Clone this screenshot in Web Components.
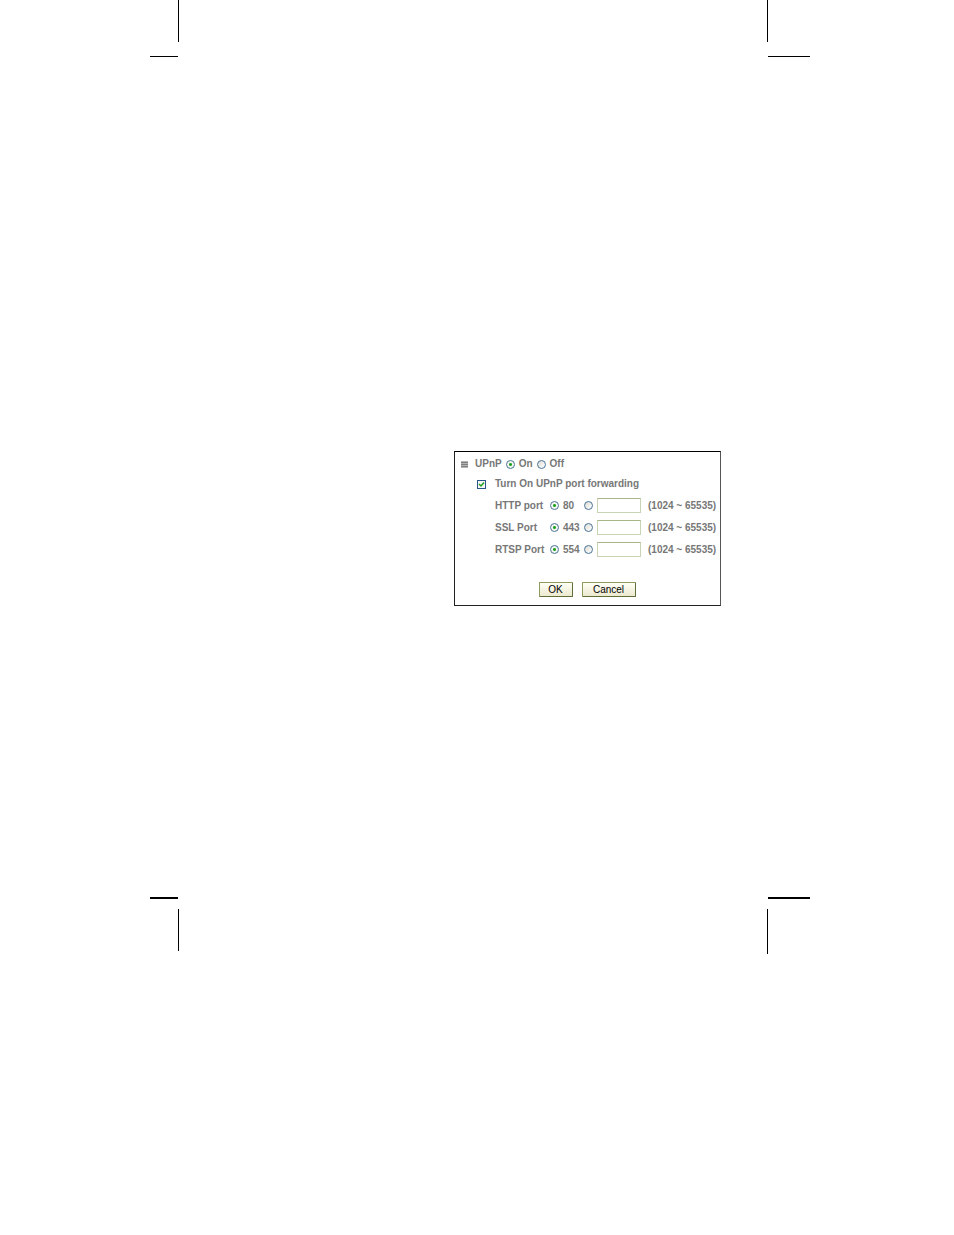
<!DOCTYPE html>
<html lang="en">
<head>
<meta charset="utf-8">
<title>UPnP</title>
<style>
    body {
        margin: 0;
        background: #fff;
        color: #777;
        font-family: "Liberation Sans", Arial, sans-serif;
        font-size: 10px;
        line-height: 12px;
    }
</style>
</head>
<body>
<manual-sheet>
    <upnp-panel>
        <port-row label="HTTP port" value="80"></port-row>
        <port-row label="SSL Port" value="443"></port-row>
        <port-row label="RTSP Port" value="554"></port-row>
        <push-button slot="actions">OK</push-button>
        <push-button slot="actions" wide>Cancel</push-button>
    </upnp-panel>
</manual-sheet>

<script>
// Look of the radio buttons, shared by the elements that hold them
const radioStyle = `
    input[type="radio"] {
        appearance: none;
        box-sizing: border-box;
        flex: none;
        width: 9px;
        height: 9px;
        margin: 0;
        border: 1px solid #4a7396;
        border-radius: 50%;
        background: linear-gradient(135deg, #dcdcd6, #fff);
    }
    input[type="radio"]:checked {
        background: radial-gradient(circle, #21a121 0, #21a121 1px, #f4f6f2 2px);
    }
`;

/**
 * CropMark
 * --------
 * One corner of the sheet's trim marks.
 * Attributes: right, bottom
 */
class CropMark extends HTMLElement {
    constructor(){
        super();
        this.attachShadow({mode: 'open'});
        this.shadowRoot.innerHTML = `
<style>
    :host {
        display: flex;
        flex-direction: column;
        gap: 14px;
        width: 29px;
    }
    :host([right]) {
        width: 43px;
    }
    :host([bottom]) {
        flex-direction: column-reverse;
        justify-content: flex-end;
        gap: 10px;
    }
    .upright {
        align-self: flex-end;
        width: 1px;
        height: 42px;
        background: #000;
    }
    .level {
        height: 1px;
        margin-right: 1px;
        background: #000;
    }
    :host([right]) .upright {
        align-self: flex-start;
    }
    :host([right]) .level {
        margin: 0 0 0 1px;
    }
    :host([bottom]) .level {
        height: 2px;
    }
    :host([bottom][right]) .upright {
        height: 45px;
    }
</style>
<div class="upright"></div>
<div class="level"></div>
`;
    }
}

/**
 * ManualSheet
 * -----------
 * Printed page with a trim mark at each corner
 */
class ManualSheet extends HTMLElement {
    constructor(){
        super();
        this.attachShadow({mode: 'open'});
        this.shadowRoot.innerHTML = `
<style>
    :host {
        display: block;
        padding: 0 144px 0 150px;
    }
    .marks {
        display: flex;
        justify-content: space-between;
    }
    main {
        padding: 394px 89px 291px 304px;
    }
</style>
<div class="marks">
    <crop-mark></crop-mark>
    <crop-mark right></crop-mark>
</div>
<main><slot></slot></main>
<div class="marks">
    <crop-mark bottom></crop-mark>
    <crop-mark bottom right></crop-mark>
</div>
`;
    }
}

/**
 * UpnpPanel
 * ---------
 * Takes port rows, and buttons in the
 * "actions" slot
 */
class UpnpPanel extends HTMLElement {
    constructor(){
        super();
        this.attachShadow({mode: 'open'});
        this.shadowRoot.innerHTML = `
<style>
    ${radioStyle}
    :host {
        display: block;
        padding: 6px 0 8px 6px;
        border: 1px solid #222;
        border-top-color: #000;
        border-right-color: #555;
        font-weight: bold;
    }
    .line,
    label {
        display: flex;
        align-items: center;
        gap: 4px;
        white-space: nowrap;
    }
    .bullet {
        flex: none;
        width: 7px;
        height: 7px;
        margin-right: 3px;
    }
    .forwarding {
        gap: 9px;
        padding: 8px 0 0 16px;
    }
    input[type="checkbox"] {
        appearance: none;
        box-sizing: border-box;
        flex: none;
        width: 9px;
        height: 9px;
        margin: 0;
        border: 1px solid #2a5588;
        background: #f6f6f2;
    }
    .check {
        display: grid;
    }
    .check > * {
        grid-area: 1 / 1;
    }
    .check svg {
        width: 9px;
        height: 9px;
        pointer-events: none;
    }
    input:not(:checked) + svg {
        visibility: hidden;
    }
    .ports {
        display: grid;
        gap: 7px;
        padding: 8px 0 0 34px;
    }
    .actions {
        display: flex;
        justify-content: center;
        gap: 9px;
        padding: 25px 7px 0 0;
    }
</style>
<div class="line" role="radiogroup" aria-labelledby="title">
    <svg class="bullet" viewBox="0 0 7 7"><path d="M0 0h7v7H0z" fill="#b4b4b4"/><path d="M0 1.500h7M0 3.500h7M0 5.500h7" stroke="#808080"/></svg>
    <span id="title">UPnP</span>
    <label><input type="radio" name="upnp" checked>On</label>
    <label><input type="radio" name="upnp">Off</label>
</div>
<label class="forwarding">
    <span class="check">
        <input type="checkbox" checked>
        <svg viewBox="0 0 9 9"><path d="M2 4l2 2 3-3.500" fill="none" stroke="#21a121" stroke-width="1.500"/></svg>
    </span>
    Turn On UPnP port forwarding
</label>
<div class="ports"><slot></slot></div>
<div class="actions"><slot name="actions"></slot></div>
`;
    }
}

/**
 * PortRow
 * -------
 * Choice between the default port and
 * one typed in by hand
 */
class PortRow extends HTMLElement {
    constructor(){
        super();
        this.attachShadow({mode: 'open'});
        this.shadowRoot.innerHTML = `
<style>
    ${radioStyle}
    :host {
        display: grid;
        grid-template-columns: 55px 34px 13px 44px auto;
        align-items: center;
        white-space: nowrap;
    }
    label {
        display: flex;
        align-items: center;
        gap: 4px;
    }
    input[type="text"] {
        box-sizing: border-box;
        width: 44px;
        height: 15px;
        margin: 0;
        padding: 0 2px;
        border: 1px solid #c8d4b4;
        border-top-color: #a6b686;
        background: #fff;
        color: inherit;
        font: inherit;
    }
    .range {
        padding-left: 7px;
    }
</style>
<span id="name"></span>
<label><input type="radio" name="port" checked><span id="value"></span></label>
<input type="radio" name="port" aria-label="Other port">
<input type="text" aria-labelledby="name">
<span class="range">(1024 ~ 65535)</span>
`;
        this.shadowRoot.querySelector('#name').textContent = this.getAttribute('label');
        this.shadowRoot.querySelector('#value').textContent = this.getAttribute('value');
    }
}

/**
 * PushButton
 * ----------
 * Attributes: wide
 */
class PushButton extends HTMLElement {
    constructor(){
        super();
        this.attachShadow({mode: 'open'});
        this.shadowRoot.innerHTML = `
<style>
    :host {
        display: block;
        width: 34px;
    }
    :host([wide]) {
        width: 54px;
    }
    button {
        display: block;
        box-sizing: border-box;
        width: 100%;
        height: 15px;
        padding: 0;
        border: 1px solid #8c9c5c;
        border-right-color: #5f6f3c;
        border-bottom-color: #5f6f3c;
        border-radius: 1px;
        background: linear-gradient(#fffff6, #ece9cf);
        color: #000;
        font-family: inherit;
        font-size: 10px;
        line-height: 12px;
    }
</style>
<button type="button"><slot></slot></button>
`;
    }
}

window.customElements.define('crop-mark', CropMark);
window.customElements.define('push-button', PushButton);
window.customElements.define('port-row', PortRow);
window.customElements.define('upnp-panel', UpnpPanel);
window.customElements.define('manual-sheet', ManualSheet);
</script>
</body>
</html>
